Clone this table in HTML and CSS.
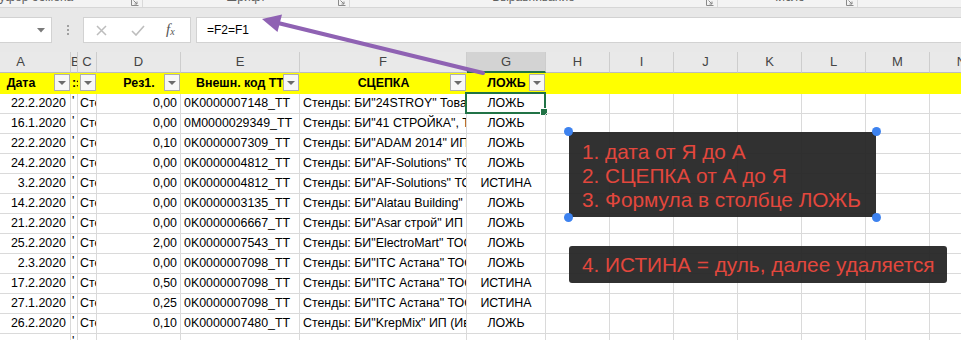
FILE: index.html
```html
<!DOCTYPE html>
<html lang="ru">
<head>
<meta charset="utf-8">
<title>Excel</title>
<link rel="stylesheet" href="styles.css">
</head>
<body>
<div class="page">
  <div class="ribbon">
    <div class="rgroup g1"><span>Буфер обмена</span><svg class="launch" width="8" height="7" viewBox="0 0 8 7"><path d="M0.5 0.5V6.5H7.5" fill="none" stroke="#8a8a8a"/><path d="M2.5 1.5L6 5M6 2.5V5H3.5" fill="none" stroke="#8a8a8a"/></svg></div>
    <div class="rgroup g2"><span>Шрифт</span><svg class="launch" width="8" height="7" viewBox="0 0 8 7"><path d="M0.5 0.5V6.5H7.5" fill="none" stroke="#8a8a8a"/><path d="M2.5 1.5L6 5M6 2.5V5H3.5" fill="none" stroke="#8a8a8a"/></svg></div>
    <div class="rgroup g3"><span>Выравнивание</span><svg class="launch" width="8" height="7" viewBox="0 0 8 7"><path d="M0.5 0.5V6.5H7.5" fill="none" stroke="#8a8a8a"/><path d="M2.5 1.5L6 5M6 2.5V5H3.5" fill="none" stroke="#8a8a8a"/></svg></div>
    <div class="rgroup g4"><span>Число</span><svg class="launch" width="8" height="7" viewBox="0 0 8 7"><path d="M0.5 0.5V6.5H7.5" fill="none" stroke="#8a8a8a"/><path d="M2.5 1.5L6 5M6 2.5V5H3.5" fill="none" stroke="#8a8a8a"/></svg></div>
    <div class="rgroup g5"></div>
  </div>
  <div class="band"></div>
  <div class="fbar">
    <div class="namebox"><svg class="nb-arrow" width="8" height="5" viewBox="0 0 8 5"><path d="M0 0H8L4 4.5Z" fill="#7a7a7a"/></svg></div>
    <div class="dots"><i></i><i></i><i></i></div>
    <div class="fbtns">
      <svg class="ic-x" width="11" height="11" viewBox="0 0 11 11"><path d="M1 1L10 10M10 1L1 10" stroke="#bdbdbd" stroke-width="1.5" fill="none"/></svg>
      <svg class="ic-ok" width="14" height="11" viewBox="0 0 14 11"><path d="M1 6L5 10L13 1" stroke="#bdbdbd" stroke-width="1.6" fill="none"/></svg>
      <span class="fx">f<sub>x</sub></span>
    </div>
    <div class="finput">=F2=F1</div>
  </div>
  <div class="gap"></div>

  <div class="sheet">
    <div class="r colhead">
      <div class="c">A</div><div class="c">B</div><div class="c">C</div><div class="c">D</div><div class="c">E</div><div class="c">F</div><div class="c sel">G</div><div class="c">H</div><div class="c">I</div><div class="c">J</div><div class="c">K</div><div class="c">L</div><div class="c">M</div><div class="c">N</div>
    </div>
    <div class="r hdr">
      <div class="c ctr">Дата<span class="dd"></span></div>
      <div class="c bcol">:з</div>
      <div class="c"><span class="dd"></span></div>
      <div class="c ctr">Рез1.<span class="dd"></span></div>
      <div class="c left">Внешн. код ТТ<span class="dd"></span></div>
      <div class="c ctr">СЦЕПКА<span class="dd"></span></div>
      <div class="c ctr">ЛОЖЬ<span class="dd"></span></div>
      <div class="c"></div><div class="c"></div><div class="c"></div><div class="c"></div><div class="c"></div><div class="c"></div><div class="c"></div>
    </div>

    <div class="r d"><div class="c rt">22.2.2020</div><div class="c q">'</div><div class="c cc">Стенды</div><div class="c num">0,00</div><div class="c txt">0K0000007148_TT</div><div class="c txt">Стенды: БИ"24STROY" Товарищество</div><div class="c ctr active">ЛОЖЬ<span class="selbox"></span></div><div class="c"></div><div class="c"></div><div class="c"></div><div class="c"></div><div class="c"></div><div class="c"></div><div class="c"></div></div>
    <div class="r d"><div class="c rt">16.1.2020</div><div class="c q">'</div><div class="c cc">Стенды</div><div class="c num">0,00</div><div class="c txt">0M0000029349_TT</div><div class="c txt">Стенды: БИ"41 СТРОЙКА", ТОО</div><div class="c ctr">ЛОЖЬ</div><div class="c"></div><div class="c"></div><div class="c"></div><div class="c"></div><div class="c"></div><div class="c"></div><div class="c"></div></div>
    <div class="r d"><div class="c rt">22.2.2020</div><div class="c q">'</div><div class="c cc">Стенды</div><div class="c num">0,10</div><div class="c txt">0K0000007309_TT</div><div class="c txt">Стенды: БИ"ADAM 2014" ИП</div><div class="c ctr">ЛОЖЬ</div><div class="c"></div><div class="c"></div><div class="c"></div><div class="c"></div><div class="c"></div><div class="c"></div><div class="c"></div></div>
    <div class="r d"><div class="c rt">24.2.2020</div><div class="c q">'</div><div class="c cc">Стенды</div><div class="c num">0,00</div><div class="c txt">0K0000004812_TT</div><div class="c txt">Стенды: БИ"AF-Solutions" ТОО</div><div class="c ctr">ЛОЖЬ</div><div class="c"></div><div class="c"></div><div class="c"></div><div class="c"></div><div class="c"></div><div class="c"></div><div class="c"></div></div>
    <div class="r d"><div class="c rt">3.2.2020</div><div class="c q">'</div><div class="c cc">Стенды</div><div class="c num">0,00</div><div class="c txt">0K0000004812_TT</div><div class="c txt">Стенды: БИ"AF-Solutions" ТОО</div><div class="c ctr">ИСТИНА</div><div class="c"></div><div class="c"></div><div class="c"></div><div class="c"></div><div class="c"></div><div class="c"></div><div class="c"></div></div>
    <div class="r d"><div class="c rt">14.2.2020</div><div class="c q">'</div><div class="c cc">Стенды</div><div class="c num">0,00</div><div class="c txt">0K0000003135_TT</div><div class="c txt">Стенды: БИ"Alatau Building" ТОО</div><div class="c ctr">ЛОЖЬ</div><div class="c"></div><div class="c"></div><div class="c"></div><div class="c"></div><div class="c"></div><div class="c"></div><div class="c"></div></div>
    <div class="r d"><div class="c rt">21.2.2020</div><div class="c q">'</div><div class="c cc">Стенды</div><div class="c num">0,00</div><div class="c txt">0K0000006667_TT</div><div class="c txt">Стенды: БИ"Asar строй" ИП</div><div class="c ctr">ЛОЖЬ</div><div class="c"></div><div class="c"></div><div class="c"></div><div class="c"></div><div class="c"></div><div class="c"></div><div class="c"></div></div>
    <div class="r d"><div class="c rt">25.2.2020</div><div class="c q">'</div><div class="c cc">Стенды</div><div class="c num">2,00</div><div class="c txt">0K0000007543_TT</div><div class="c txt">Стенды: БИ"ElectroMart" ТОО</div><div class="c ctr">ЛОЖЬ</div><div class="c"></div><div class="c"></div><div class="c"></div><div class="c"></div><div class="c"></div><div class="c"></div><div class="c"></div></div>
    <div class="r d"><div class="c rt">2.3.2020</div><div class="c q">'</div><div class="c cc">Стенды</div><div class="c num">0,00</div><div class="c txt">0K0000007098_TT</div><div class="c txt">Стенды: БИ"ITC Астана" ТОО</div><div class="c ctr">ЛОЖЬ</div><div class="c"></div><div class="c"></div><div class="c"></div><div class="c"></div><div class="c"></div><div class="c"></div><div class="c"></div></div>
    <div class="r d"><div class="c rt">17.2.2020</div><div class="c q">'</div><div class="c cc">Стенды</div><div class="c num">0,50</div><div class="c txt">0K0000007098_TT</div><div class="c txt">Стенды: БИ"ITC Астана" ТОО</div><div class="c ctr">ИСТИНА</div><div class="c"></div><div class="c"></div><div class="c"></div><div class="c"></div><div class="c"></div><div class="c"></div><div class="c"></div></div>
    <div class="r d"><div class="c rt">27.1.2020</div><div class="c q">'</div><div class="c cc">Стенды</div><div class="c num">0,25</div><div class="c txt">0K0000007098_TT</div><div class="c txt">Стенды: БИ"ITC Астана" ТОО</div><div class="c ctr">ИСТИНА</div><div class="c"></div><div class="c"></div><div class="c"></div><div class="c"></div><div class="c"></div><div class="c"></div><div class="c"></div></div>
    <div class="r d"><div class="c rt">26.2.2020</div><div class="c q">'</div><div class="c cc">Стенды</div><div class="c num">0,10</div><div class="c txt">0K0000007480_TT</div><div class="c txt">Стенды: БИ"KrepMix" ИП (Иванов)</div><div class="c ctr">ЛОЖЬ</div><div class="c"></div><div class="c"></div><div class="c"></div><div class="c"></div><div class="c"></div><div class="c"></div><div class="c"></div></div>
    <div class="r d"><div class="c rt"></div><div class="c q">'</div><div class="c cc"></div><div class="c num"></div><div class="c txt"></div><div class="c txt"></div><div class="c ctr"></div><div class="c"></div><div class="c"></div><div class="c"></div><div class="c"></div><div class="c"></div><div class="c"></div><div class="c"></div></div>
  </div>

  <svg class="arrow" width="961" height="340" viewBox="0 0 961 340">
    <line x1="483" y1="73" x2="278" y2="23" stroke="#8f62b3" stroke-width="4" stroke-linecap="round"/>
    <polygon points="262,19 282,14.5 277.5,32" fill="#8f62b3"/>
  </svg>

  <div class="note n1">
    <div>1. дата от Я до А</div>
    <div>2. СЦЕПКА от А до Я</div>
    <div>3. Формула в столбце ЛОЖЬ</div>
    <i class="h tl"></i><i class="h tr"></i><i class="h bl"></i><i class="h br"></i>
  </div>
  <div class="note n2">4. ИСТИНА = дуль, далее удаляется</div>
</div>
</body>
</html>
```

FILE: styles.css
```css
* { box-sizing: border-box; }
html, body { margin: 0; padding: 0; }
body {
  width: 961px;
  height: 340px;
  overflow: hidden;
  background: #ffffff;
  font-family: "Liberation Sans", Arial, sans-serif;
}
.page {
  position: relative;
  width: 961px;
  height: 340px;
  overflow: hidden;
}

/* Ribbon strip (cut off) */
.ribbon {
  height: 8px;
  margin-left: -77px;
  display: flex;
  background: #f3f3f3;
  border-bottom: 1px solid #d6d6d6;
  overflow: hidden;
}
.rgroup {
  position: relative;
  height: 7px;
  display: flex;
  justify-content: center;
  border-right: 1px solid #d9d9d9;
}
.rgroup span {
  font-size: 12px;
  line-height: 14px;
  margin-top: -10px;
  color: #5f5f5f;
  white-space: nowrap;
}
.g1 { width: 220px; }
.g2 { width: 207px; }
.g3 { width: 368px; }
.g4 { width: 140px; }
.g5 { flex: 1; border-right: none; }
.launch { position: absolute; right: 3px; top: -1px; }

.band { height: 9px; background: #e8e8e8; }

/* Formula bar */
.fbar {
  height: 27px;
  display: flex;
  align-items: flex-start;
  background: #e8e8e8;
}
.namebox {
  position: relative;
  width: 52px;
  height: 26px;
  background: #ffffff;
  border: 1px solid #d2d2d2;
  border-left: none;
}
.nb-arrow { position: absolute; left: 37px; top: 10px; }
.dots {
  width: 31px;
  height: 26px;
  display: flex;
  flex-direction: column;
  align-items: center;
  justify-content: center;
  gap: 2px;
}
.dots i { display: block; width: 2px; height: 2px; background: #a0a0a0; }
.fbtns {
  width: 108px;
  height: 26px;
  display: flex;
  align-items: center;
  background: #ffffff;
  border: 1px solid #d2d2d2;
}
.ic-x { margin-left: 12px; }
.ic-ok { margin-left: 24px; }
.fx {
  margin-left: 21px;
  font-family: "Liberation Serif", "Times New Roman", serif;
  font-style: italic;
  font-size: 15px;
  color: #555;
  line-height: 15px;
}
.fx sub { font-size: 10px; vertical-align: -1px; }
.finput {
  flex: 1;
  height: 26px;
  margin-left: 5px;
  padding-left: 10px;
  background: #ffffff;
  border: 1px solid #d2d2d2;
  border-right: none;
  font-size: 12px;
  line-height: 24px;
  color: #000;
}
.gap { height: 8px; background: #e8e8e8; }

/* Sheet */
.sheet { margin-left: -29px; }
.r {
  display: grid;
  grid-template-columns: 100px 7px 19px 84px 119px 167px 79px 64px 64px 64px 64px 64px 64px 64px;
}
.c {
  position: relative;
  white-space: nowrap;
  overflow: hidden;
  font-size: 12.4px;
  color: #000;
}
.colhead .c {
  height: 21px;
  background: #e9e9e9;
  border-right: 1px solid #cdcdcd;
  border-bottom: 1px solid #bcbcbc;
  text-align: center;
  font-size: 13px;
  line-height: 20px;
  color: #444;
}
.colhead .c.sel {
  background: #d3d3d3;
  border-bottom: 2px solid #217346;
}

.hdr { background: #ffff00; }
.hdr .c {
  height: 21px;
  line-height: 20px;
  font-weight: bold;
}
.hdr .ctr { text-align: center; }
.hdr .left { padding-left: 15px; }
.hdr .bcol { text-align: left; padding-left: 1px; }
.dd {
  position: absolute;
  right: 1px;
  top: 1px;
  width: 16px;
  height: 17px;
  background: #f7f7f7;
  border: 1px solid #aeaeae;
}
.dd::after {
  content: "";
  position: absolute;
  left: 3px;
  top: 6px;
  border-left: 4px solid transparent;
  border-right: 4px solid transparent;
  border-top: 4px solid #6b6b6b;
}

.d .c {
  height: 20px;
  line-height: 19px;
  border-right: 1px solid #dadada;
  border-bottom: 1px solid #dadada;
}
.d .rt { text-align: right; padding-right: 4px; }
.d .num { text-align: right; padding-right: 3px; }
.d .txt { padding-left: 3px; }
.d .cc { padding-left: 2px; }
.d .q { padding-left: 1px; line-height: 14px; }
.d .ctr { text-align: center; }
.d .c.active { overflow: visible; }
.selbox {
  position: absolute;
  left: -2px;
  top: -2px;
  right: -1px;
  bottom: -1px;
  border: 2px solid #217346;
}
.selbox::after {
  content: "";
  position: absolute;
  right: -4px;
  bottom: -4px;
  width: 6px;
  height: 6px;
  background: #217346;
  border: 1px solid #ffffff;
}

/* Overlays */
.arrow {
  position: absolute;
  left: 0;
  top: 0;
  pointer-events: none;
}
.note {
  position: absolute;
  left: 569px;
  background: rgba(36, 36, 36, 0.94);
  color: #e3473d;
  font-size: 20.8px;
  white-space: nowrap;
}
.n1 {
  top: 132px;
  width: 307px;
  height: 85px;
  padding: 8px 0 0 13px;
  line-height: 24px;
}
.n2 {
  top: 246px;
  width: 378px;
  height: 37px;
  padding-left: 13px;
  line-height: 37px;
  border-radius: 3px;
}
.h {
  position: absolute;
  width: 9px;
  height: 9px;
  border-radius: 50%;
  background: #3d82ef;
}
.h.tl { left: -5px; top: -5px; }
.h.tr { right: -5px; top: -5px; }
.h.bl { left: -5px; bottom: -5px; }
.h.br { right: -5px; bottom: -5px; }
```
